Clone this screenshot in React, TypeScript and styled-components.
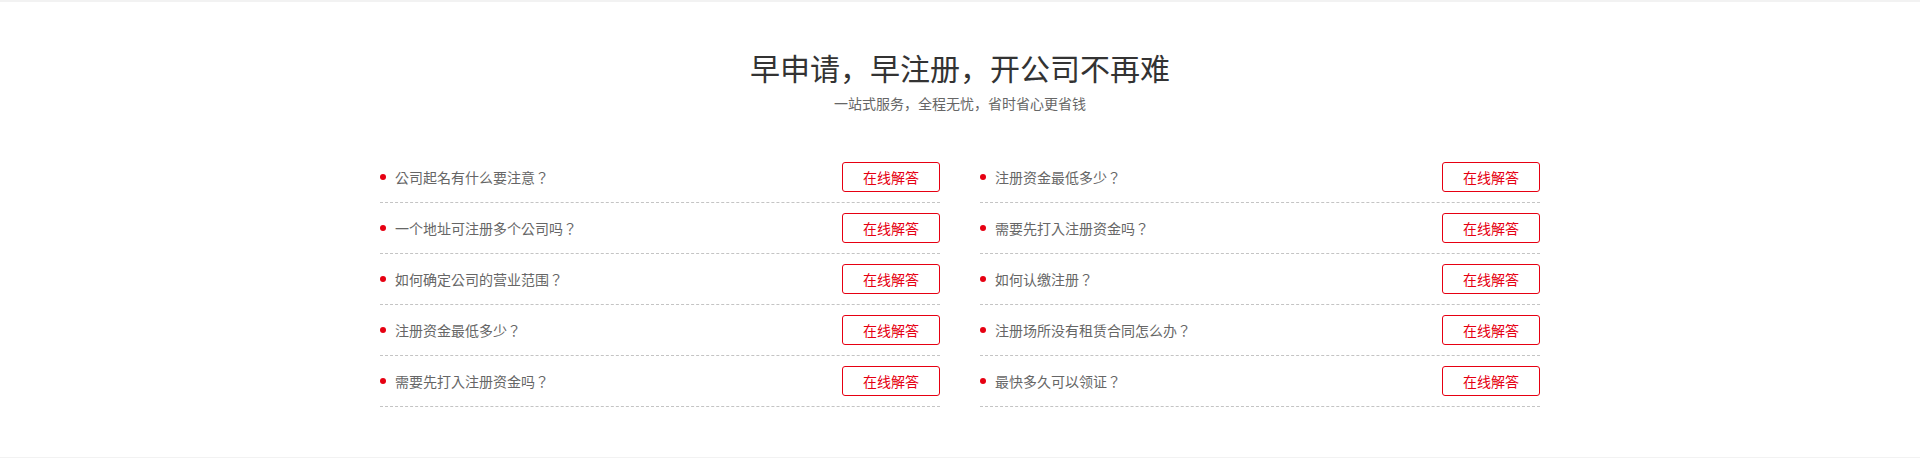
import React from 'react';
import styled, { createGlobalStyle } from 'styled-components';

const GlobalStyle = createGlobalStyle`
    html, body {
        margin: 0;
        padding: 0;
        background: #fff;
        font-family: "Noto Sans CJK TC", "Noto Sans CJK SC", "Noto Sans", sans-serif;
    }
`;

const Section = styled.section`
    border-top: 2px solid #f2f2f2;
    border-bottom: 1px solid #f2f2f2;
    padding: 45px 0 50px;
    display: flex;
    flex-direction: column;
    align-items: center;
`;

// 标题用简体字形，逗号落在底部
const Title = styled.h2`
    margin: 0;
    font-family: "Noto Sans CJK SC", sans-serif;
    font-size: 30px;
    line-height: 40px;
    font-weight: 400;
    color: #333;
`;

const SubTitle = styled.p`
    margin: 6px 0 0;
    font-family: "Noto Sans CJK SC", sans-serif;
    font-size: 14px;
    line-height: 20px;
    color: #666;
`;

const Columns = styled.div`
    margin-top: 39px;
    width: 1160px;
    display: grid;
    grid-template-columns: 1fr 1fr;
    column-gap: 40px;
`;

const List = styled.ul`
    margin: 0;
    padding: 0;
    list-style: none;
`;

const Item = styled.li`
    height: 50px;
    border-bottom: 1px dashed #c4c4c4;
    display: flex;
    align-items: center;
    justify-content: space-between;
`;

const Question = styled.span`
    display: flex;
    align-items: center;
    gap: 9px;
    font-size: 14px;
    color: #666;

    &::before {
        content: '';
        width: 6px;
        height: 6px;
        border-radius: 50%;
        background: #e60012;
    }
`;

const AnswerButton = styled.button`
    width: 98px;
    height: 30px;
    padding: 0;
    border: 1px solid #e60012;
    border-radius: 3px;
    background: #fff;
    color: #e60012;
    font-family: inherit;
    font-size: 14px;
    cursor: pointer;
`;

const leftQuestions = [
    '公司起名有什么要注意？',
    '一个地址可注册多个公司吗？',
    '如何确定公司的营业范围？',
    '注册资金最低多少？',
    '需要先打入注册资金吗？',
];

const rightQuestions = [
    '注册资金最低多少？',
    '需要先打入注册资金吗？',
    '如何认缴注册？',
    '注册场所没有租赁合同怎么办？',
    '最快多久可以领证？',
];

const QuestionList = ({ items }: { items: string[] }) => (
    <List>
        {items.map((q, i) => (
            <Item key={i}>
                <Question>{q}</Question>
                <AnswerButton>在线解答</AnswerButton>
            </Item>
        ))}
    </List>
);

export default function App() {
    return (
        <>
            <GlobalStyle />
            <Section>
                <Title>早申请，早注册，开公司不再难</Title>
                <SubTitle>一站式服务，全程无忧，省时省心更省钱</SubTitle>
                <Columns>
                    <QuestionList items={leftQuestions} />
                    <QuestionList items={rightQuestions} />
                </Columns>
            </Section>
        </>
    );
}
